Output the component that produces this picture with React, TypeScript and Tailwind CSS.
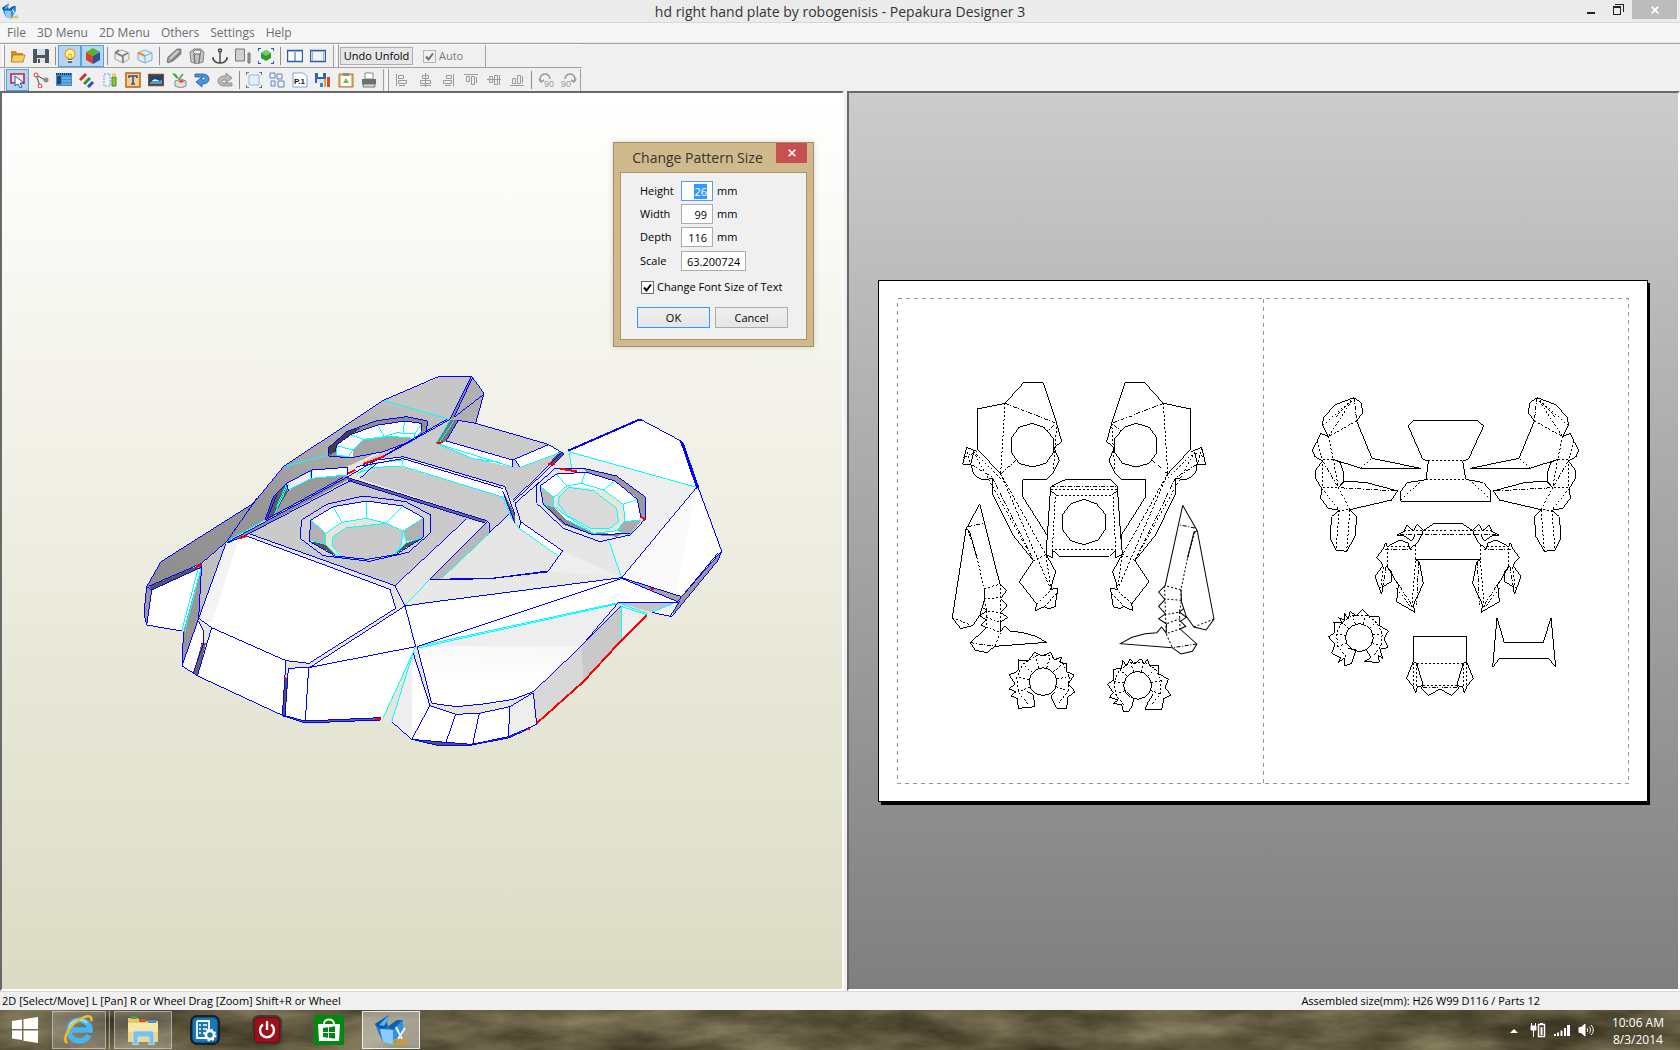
import { useEffect, useRef, type ReactNode } from "react"

const MENUS = ["File", "3D Menu", "2D Menu", "Others", "Settings", "Help"]

interface Face {
  points: string;
  fill: string;
}

interface Edge {
  d: string;
  color: string;
  width?: number;
}

// Faces of the 3D model, back to front
const FACES: Face[] = [
  { points: "50,680 93,605 370,430 460,320 760,121 935,49 1025,48 1062,100 1037,190 1255,252 1295,277 1530,180 1653,243 1775,573 1625,770 1550,765 1220,1093 1135,1130 1025,1153 948,1155 845,1138 785,1085 752,1080 526,1088 455,1065 157,918 158,813 50,795", fill: "#e6e6da" },
  { points: "50,680 93,605 370,430 460,320 760,121 960,178 640,325 545,330 470,370 430,410 405,480 290,545 215,610 60,688", fill: "url(#wing)" },
  { points: "760,121 935,49 1025,48 960,178", fill: "#c6c6c6" },
  { points: "1025,48 1062,100 1037,190 960,178", fill: "#b0b0b0" },
  { points: "1025,48 1022,70 972,172 960,178", fill: "#8a8a8a" },
  { points: "65,690 215,625 155,813 50,795", fill: "#ffffff" },
  { points: "50,680 65,690 50,795 42,760", fill: "#999999" },
  { points: "58,680 215,612 213,622 65,690", fill: "#555555" },
  { points: "215,612 206,775 157,915 160,815", fill: "#979797" },
  { points: "217,612 287,550 206,775", fill: "#c0c0c0" },
  { points: "205,785 222,815 222,845 190,940 157,915", fill: "#ffffff" },
  { points: "215,850 228,850 203,945 190,940", fill: "#666666" },
  { points: "290,550 355,530 780,688 797,745 537,910 470,902 245,803 205,775", fill: "#ffffff" },
  { points: "290,550 325,540 245,790 205,775", fill: "#f4f4f4" },
  { points: "245,803 468,902 457,1065 203,945", fill: "#ffffff" },
  { points: "475,925 536,922 526,1083 465,1070", fill: "#ffffff" },
  { points: "465,955 475,955 466,1068 457,1065", fill: "#555555" },
  { points: "540,922 855,862 758,1073 526,1083", fill: "#ffffff" },
  { points: "526,1083 752,1073 752,1080 526,1089 457,1067", fill: "#666666" },
  { points: "825,738 855,860 540,922", fill: "#ffffff" },
  { points: "290,548 650,352 665,362 355,522", fill: "#8c8c8c" },
  { points: "360,520 655,358 1070,485 795,677", fill: "#cacaca" },
  { points: "650,352 1070,482 1068,490 655,362", fill: "#6b6b6b" },
  { points: "795,677 1005,478 1070,487 900,658 825,735", fill: "#e6e6e6" },
  { points: "1070,487 1078,520 935,655 900,658", fill: "#b8b8b8" },
  { points: "700,305 960,178 1037,190 1255,253 1295,277 1145,420 1125,380 820,292", fill: "#cbcbcb" },
  { points: "690,355 740,320 815,318 1118,405 1140,462 1076,520 1070,482", fill: "#cbcbcb" },
  { points: "678,322 740,300 820,292 1125,385 1118,411 815,320 740,322 680,340", fill: "#ffffff" },
  { points: "960,180 985,180 945,245 918,250", fill: "#777777" },
  { points: "925,250 950,243 1150,298 1150,322 1035,297", fill: "#ffffff" },
  { points: "1155,298 1255,253 1293,276 1170,322", fill: "#ffffff" },
  { points: "1285,277 1303,282 1270,315 1255,313", fill: "#555555" },
  { points: "1118,392 1155,465 1157,500 1125,420", fill: "#6a6a6a" },
  { points: "1135,465 1165,500 1285,588 1255,633 1085,655 935,655 1078,520", fill: "#e5e5e5" },
  { points: "1172,485 1298,573 1286,590 1168,505", fill: "#ffffff" },
  { points: "825,735 900,658 1255,633 1475,653 900,725", fill: "#e8e8e8" },
  { points: "1315,275 1700,382 1475,653 1255,633 1298,573 1170,485 1155,430 1260,320", fill: "#eeeeee" },
  { points: "1315,275 1325,325 1440,540 1475,653 1298,573 1170,485 1155,430", fill: "#e6e6e6" },
  { points: "1315,272 1530,180 1653,243 1698,382", fill: "#ffffff" },
  { points: "1700,382 1775,573 1655,710 1475,655", fill: "#ffffff" },
  { points: "1698,390 1640,700 1475,655", fill: "#fafafa" },
  { points: "1655,710 1775,573 1765,600 1625,770 1643,725", fill: "#999999" },
  { points: "1475,655 1655,710 1643,725", fill: "#a5a5a5" },
  { points: "825,738 900,727 1475,653 1643,725 1465,728 860,860", fill: "#ffffff" },
  { points: "1465,728 1643,725 1565,757", fill: "#c5c5c5" },
  { points: "1565,757 1643,725 1625,770", fill: "#f6f6f6" },
  { points: "860,860 1465,728 1355,857 1210,995 1100,1030 980,1040 905,1030", fill: "url(#hull)" },
  { points: "860,860 1465,728 1355,857", fill: "#eeeeee" },
  { points: "1475,737 1550,765 1475,840", fill: "#eeeeee" },
  { points: "1355,857 1475,737 1475,840 1360,965", fill: "#c9c9c9" },
  { points: "1210,995 1355,857 1360,965 1220,1090", fill: "#d8d8d8" },
  { points: "900,1040 977,1063 1048,1060 1140,1040 1135,1130 1025,1153 948,1147 845,1138", fill: "#ffffff" },
  { points: "1140,1040 1210,998 1220,1093 1135,1130", fill: "#eeeeee" },
  { points: "848,885 895,1035 845,1138", fill: "#ffffff" },
  { points: "848,885 845,1138 785,1085", fill: "#eeeeee" },
  { points: "845,1138 948,1147 1025,1153 1135,1130 1200,1105 1135,1135 1025,1157 930,1158", fill: "#555555" },

  // rear ring
  { points: "597,262 650,215 740,182 830,170 892,183 890,212 845,243 760,275 660,294 597,288", fill: "#8e8e8e" },
  { points: "597,262 650,215 695,202 620,255 615,275 597,288", fill: "#404040" },
  { points: "620,255 665,222 745,195 825,183 873,190 876,210 850,240 760,275 670,292 620,288", fill: "#fafafa" },
  { points: "668,270 700,240 770,230 840,232 850,242 760,275 670,292", fill: "#a5a5a5" },

  // left half ring
  { points: "405,480 430,410 470,370 545,330 652,322 652,350 410,480", fill: "#9a9a9a" },
  { points: "405,480 430,410 470,370 475,392 430,470", fill: "#5c5c5c" },
  { points: "545,332 652,322 652,345 545,355", fill: "#ffffff" },
  { points: "470,372 540,335 545,355 475,392", fill: "#eeeeee" },

  // centre ring
  { points: "515,480 590,433 700,408 828,425 902,465 900,520 835,577 718,604 580,587 510,535", fill: "#d2d2d0" },
  { points: "543,480 610,440 710,423 818,438 880,473 880,532 800,583 710,598 615,588 537,543", fill: "#ffffff" },
  { points: "543,480 587,520 585,553 537,540", fill: "#b2b2b2" },
  { points: "537,543 585,553 620,588", fill: "#555555" },
  { points: "878,475 820,513 830,545 880,532", fill: "#b2b2b2" },
  { points: "880,532 830,548 795,583", fill: "#555555" },
  { points: "587,520 635,487 710,475 768,490 820,513 830,550 800,580 715,598 625,590 585,550", fill: "#e6e6da" },
  { points: "608,530 650,503 768,490 820,513 812,560 800,578 710,598 640,590 608,560", fill: "#c9c9c9" },

  // right ring
  { points: "1220,375 1275,325 1360,325 1460,348 1545,410 1548,475 1500,525 1410,545 1300,505 1220,430", fill: "#e4e4e0" },
  { points: "1360,325 1465,350 1547,412 1549,475 1532,470 1522,415 1455,363 1370,337", fill: "#9a9a9a" },
  { points: "1230,378 1280,342 1365,338 1455,363 1522,418 1532,470 1485,520 1390,525 1305,492 1240,435", fill: "#ffffff" },
  { points: "1230,378 1272,412 1272,440 1240,433", fill: "#bbbbbb" },
  { points: "1240,433 1272,442 1310,480 1390,518 1475,523 1460,530 1390,525 1300,495", fill: "#888888" },
  { points: "1460,512 1485,485 1535,480 1500,525", fill: "#ababab" },
  { points: "1272,412 1310,378 1420,390 1480,433 1485,482 1460,512 1390,520 1305,465 1272,440", fill: "#e6e6da" },
  { points: "1285,415 1315,382 1390,392 1460,445 1465,485 1440,505 1385,507 1310,465 1275,445", fill: "#dadada" },
]

const EDGES: Edge[] = [
  // fold lines
  { color: "#00ffff", d: "M760 121L960 178M462 320L600 283M290 545L405 480M215 610L290 545M215 618L165 813M206 620L155 813M760 1073L855 865M785 1085L852 870M825 735L900 658M935 655L1078 520" },
  { color: "#00ffff", d: "M918 250L1025 295L1078 305M925 252L1150 322M1035 297L1110 307M680 340L740 322L815 318L1118 411M690 335L740 308L815 300M815 318L822 292M960 180L918 250M972 182L930 245M950 178L840 240M1170 322L1293 277M1118 411L1145 475L1168 505L1285 588" },
  { color: "#00ffff", d: "M1315 275L1700 382M1318 280L1325 325M1436 542L1475 653M860 860L1465 728M865 864L1465 731M1475 737V840M1465 728L1555 762M1565 757L1643 725M1475 740L1550 765" },
  { color: "#00ffff", d: "M620 257L668 270L700 238L763 230L800 218L855 222L850 242M668 270L655 292M700 238L660 224M763 230L743 195M820 218L823 183M855 222L873 195M700 240L770 230L840 232M620 257V286L655 290" },
  { color: "#00ffff", d: "M545 355L650 345M470 392L545 355M430 470L475 372M540 335L545 355M440 440L470 372" },
  { color: "#00ffff", d: "M543 480L587 520L635 487L710 475L768 490L820 513L878 475M610 440L635 487M710 423V475M818 438L768 490M587 520L585 553L537 540M820 513L830 548L880 532M585 553L625 590L715 598L795 583L830 548M608 530L650 503L768 490M608 530V560L635 590M820 513L812 560L795 580" },
  { color: "#00ffff", d: "M1230 378L1272 412L1310 378L1355 370L1420 390L1480 433L1485 482L1460 512L1390 520L1305 465L1272 440V412M1280 342L1310 378M1365 338L1355 370M1455 363L1420 390M1522 418L1480 433M1532 480L1485 485M1240 433L1275 442M1285 415L1315 382L1390 392L1460 445L1465 485L1440 505L1385 507L1310 465L1285 430V415M1460 512L1500 525M1390 520L1310 480" },

  // cut lines
  { color: "#0000ff", d: "M50 680L93 605L370 430L460 320L760 121L920 52L935 49H1025L1062 100L1037 190L1255 253L1295 277L1150 420M50 680L42 760L50 795L155 813M50 680L65 690L50 795M58 678L215 610M65 690L213 622M215 612L206 775M160 815L157 918L203 948L455 1065L526 1083L752 1073M457 1067L526 1089L752 1080" },
  { color: "#0000ff", d: "M1022 52L960 178M1028 52L972 172M1060 104L972 172M960 178L760 290M950 178L650 352L290 548M665 360L355 522L290 550M380 415L290 545L215 610M370 430L300 530M405 480L640 352M287 552L206 775L245 803L468 902L537 910L797 745L780 688L355 530M360 522L795 677L825 738L540 922L475 925L465 1068M825 738L857 860L540 922M468 902L457 1065M536 922L526 1083M205 782L222 815V845L190 940M245 803L203 945M206 775L157 915" },
  { color: "#0000ff", d: "M650 352L1070 482L1078 490V518M655 362L1068 490M678 322L740 300L820 290L1125 380L1155 465M690 318L820 296L1120 386M690 355L740 310M795 677L1008 478M1070 487L900 658L1085 655L1255 633L1298 573L1172 485M900 660L940 660L1090 655L1250 636M980 180L1037 190M985 182L948 243L1148 300L1255 254M1148 300V322M1155 300L1170 322M1293 275L1303 282L1150 425M1118 392L1155 490M1168 505L1172 485L1155 430L1230 365M825 738L900 727L1475 653M860 860L1475 655M1076 520L1138 462" },
  { color: "#0000ff", width: 6, d: "M1315 272L1525 180L1535 180M1653 243L1702 385" },
  { color: "#0000ff", d: "M1535 180L1653 243L1775 573L1655 710L1475 653M1660 250L1706 382M1700 382L1475 653M1775 573L1765 600L1625 770M1655 710L1643 725L1475 655M1650 722L1620 770M1765 578L1640 728M1465 728H1643M1565 757L1625 770M1465 728L1355 857L1210 995M1475 737L1355 857M1210 995L1150 1018L1060 1032L980 1040L905 1030L862 862M850 880L900 1037L845 1138M900 1037L977 1063L1048 1060L1140 1040L1210 998L1220 1093M977 1063L948 1147M1048 1060L1028 1153M1140 1040L1135 1130M785 1085L845 1138L948 1147L1025 1153L1135 1130L1220 1093M845 1138L930 1158H1010L1135 1134L1200 1105" },
  { color: "#0000ff", d: "M597 262L650 215L740 182L830 170L892 183L890 212L845 243L760 275L660 294L597 288ZM620 255L665 222L745 195L825 183L873 190L876 212M615 275L620 255M405 480L430 410L470 370L545 330L652 322V345M545 330V355M470 372L475 392M410 480L440 405" },
  { color: "#0000ff", d: "M515 480L590 433L700 408L828 425L902 465L900 520L835 577L718 604L580 587L510 535ZM543 480L610 440L710 423L818 438L880 473L880 532L800 583L710 598L615 588L537 543Z" },
  { color: "#0000ff", d: "M1220 375L1275 325L1360 325L1460 348L1545 410L1548 475L1500 525L1410 545L1300 505L1220 430ZM1532 470L1522 418L1455 363L1370 337L1280 342L1230 378L1240 433L1305 492L1390 525L1500 520" },

  // open edges
  { color: "#ff0000", width: 6, d: "M1550 765L1475 840L1360 965L1220 1090" },
  { color: "#ff0000", width: 6, d: "M765 288L700 312M655 340L676 330M325 536L352 527M198 620L215 614M217 848V856M466 952V960M735 1076H752M920 250L940 246M1255 313L1275 312M1290 326L1340 334M1532 470L1546 480M1560 685L1572 688M1190 1108H1200" },
]

function ModelView() {
  return (
    <svg viewBox="2 93 840 896" className="block h-full w-full" role="img" aria-label="3D model" shapeRendering="crispEdges">
      <defs>
        <linearGradient id="wing" x1="1" y1="0" x2="0.2" y2="1">
          <stop offset="0" stopColor="#c6c6c6" />
          <stop offset="0.6" stopColor="#999999" />
          <stop offset="1" stopColor="#8f8f8f" />
        </linearGradient>
        <linearGradient id="hull" x1="0.5" y1="0" x2="0.4" y2="1">
          <stop offset="0.3" stopColor="#f6f6f6" />
          <stop offset="0.8" stopColor="#ffffff" />
        </linearGradient>
      </defs>
      <g transform="translate(130 360) scale(0.33333)">
        {FACES.map((face) => (
          <polygon key={face.points + face.fill} points={face.points} fill={face.fill} />
        ))}
        {EDGES.map((edge) => (
          <path key={edge.d} d={edge.d} stroke={edge.color} strokeWidth={edge.width ?? 3} fill="none" />
        ))}
      </g>
    </svg>
  )
}

interface PieceProps {
  cut: string;
  valley?: string;
  mountain?: string;
  transform?: string;
}

function Piece({ cut, valley, mountain, transform }: PieceProps) {
  return (
    <g transform={transform} stroke="#000000" strokeWidth="3" fill="none">
      <path d={cut} />
      {valley && <path d={valley} strokeDasharray="6 6" />}
      {mountain && <path d={mountain} strokeDasharray="12 5 3 5" />}
    </g>
  )
}

// Ring piece: a tabbed outline round a 12-sided hole, open at the bottom
function ringPiece(outline: string, cx: number, cy: number, inner: number, body: number) {
  const at = (r: number, deg: number) => {
    const a = (deg * Math.PI) / 180;
    return `${Math.round(cx + r * Math.cos(a))} ${Math.round(cy + r * Math.sin(a))}`;
  };
  let cut = outline;
  for (let i = 0; i <= 12; i++) {
    cut += `${i === 0 ? "M" : "L"}${at(inner, i * 30)}`;
  }
  let valley = "";
  for (let i = 0; i <= 9; i++) {
    const deg = 125 + i * 32;
    valley += `${i === 0 ? "M" : "L"}${at(body, deg)}`;
  }
  for (let i = 1; i < 9; i++) {
    const deg = 125 + i * 32;
    valley += `M${at(inner, deg)}L${at(body, deg)}`;
  }
  return { cut, valley };
}

const RING_LEFT = ringPiece("M262 965L280 975L285 1010L235 1015L232 985L212 978L228 965L207 957L225 942L208 915L230 905L237 895L235 870L265 872L283 847L305 858L332 847L343 868L365 862L360 878L380 880V905L403 915L385 942L405 965L383 982L380 1015H350L333 980L345 965", 309, 935, 42, 80)
const RING_RIGHT = ringPiece("M560 965L580 985L578 1005L565 1025H550L545 1005L520 1000L535 990L508 982L520 968L503 942L522 930L520 898L545 895L548 870L558 888L570 868L583 882L603 866L612 882L622 868L630 888L657 887V912L685 928L675 952L692 975L672 985L665 1020L615 1018L625 995L640 972", 593, 946, 42, 72)
const RING_SMALL = ringPiece("M145 790L168 795L155 835L135 843L132 820L115 832L122 818L95 805L105 778L85 755L103 745L102 712H128L115 698L135 705L133 685L145 703L150 680L168 692L188 673L205 693L238 695V722L265 738L252 762L265 787L240 793L248 820L235 812L238 832L193 830L212 818L200 795", 178, 758, 42, 70)

const WING = {
  cut: "M195 100L250 39H310L350 160L365 215L342 233L358 272L340 308L318 330H248V380L322 497M195 100L112 117V237L182 312M112 245L80 232L68 283L92 284L100 250M95 284L97 305L112 322L130 330L157 325V370L220 497L280 572L238 635L290 702L286 722L313 710L325 716L345 710L354 655L333 658L338 632L347 605L325 565L318 553L322 497M277 160L312 172L340 205V248L318 280L277 291L237 280L215 248L214 205L237 172Z",
  valley: "M195 100L182 312M350 160L340 310M100 245L182 325M182 312L318 555M182 312L333 660M100 245L280 570M280 572L318 553L333 660L290 702M313 710L350 670M80 235L92 284",
  mountain: "M195 100L350 160L322 183M182 312L232 267M95 284L157 322L280 570M70 262L112 245",
}

const LEG = {
  cut: "M119 402L78 478L37 743L62 776L98 767L120 735L133 690V655M119 402L180 643L200 662L182 685L202 705L182 728L203 742L180 758L182 785L195 767L210 784L245 787L285 798L320 817L165 829L140 848L105 840L91 818L140 773L122 765L138 750L120 738L140 722L127 712L133 690M78 478L88 482L110 560",
  valley: "M85 482L110 560L133 655L180 643M133 687L182 683M133 655V690L140 722L182 730M138 742L182 758M140 722V773L182 787L165 829M182 643V787M37 743L98 767",
  mountain: "M91 818L165 829M85 470L133 460",
}

const CENTRE_BOX = {
  cut: "M322 497L332 350L378 328H512L532 350L542 497M332 362L350 376M532 362L515 376M337 540L358 559H508L527 540M337 540V563L318 553M527 540V563L548 553M432 388L470 402L498 435V475L475 510L432 524L392 512L367 478V435L392 402Z",
  valley: "M334 360H530M350 376H515M346 380L337 540H527L519 380",
  mountain: "M334 349H532M322 497L318 553M542 497L548 553",
}

const ARM = {
  cut: "M85 155L68 122L70 97L108 58L162 38L185 55L187 85L170 108L216 220L362 250H182L100 223L120 232L130 262V290L115 308L135 288L200 293L293 318L275 345L150 374L170 395L165 455L140 499L108 495L90 460L95 395L118 376L85 370L62 340L65 310L47 280V255L68 228L45 215L37 195L52 168L62 145L85 155",
  valley: "M162 38L68 122M162 38L85 155M162 38L108 95M170 108L85 155L100 223H68M52 168L68 228V308H115M182 250L216 220M100 223L115 308L150 374L118 376L108 495M150 374L140 499M65 310L118 376",
  mountain: "M162 38L170 108M68 228L115 308L293 318",
}

const BRACKET = {
  cut: "M340 107H533L551 123L505 223L488 228L497 283L550 293L573 318V349H303V318L322 293L378 284L385 228L368 223L325 123Z",
  valley: "M385 228H488M378 283H497M303 345L360 290M573 345L515 290",
}

const ARCH = {
  cut: "M444 415H403L370 437L352 418L340 437L320 420L312 440L290 450L312 453L335 468L345 450M370 437L355 470L330 492L325 475L300 465L262 485L257 473L250 490L230 518L250 540L225 575L245 628L248 605L275 590V560L260 543L295 600L290 650L345 682L340 660L370 595L358 530L345 523H444",
  valley: "M312 437H444M260 484H330M262 490V543M250 545L242 610M290 610L335 670M347 480V523L335 665",
  mountain: "M300 448H444M255 493H335M356 530L350 660M260 543L340 668M258 545L248 605",
}

const BOX_FLAP = {
  cut: "M420 755H340V830L320 880L340 905L347 925L352 905L370 902L350 835L340 830M370 902L362 908L385 932L420 912",
  valley: "M350 835H420M370 902H420M341 835V905M350 838V905",
  mountain: "M370 909H420",
}

const H_SHAPE = {
  cut: "M591 698L578 847L597 822H748L767 847L753 698L730 773H613Z",
}

function PatternView() {
  return (
    <svg viewBox="849 93 829 896" className="block h-full w-full" role="img" aria-label="2D pattern" shapeRendering="crispEdges">
      <rect x="881" y="283" width="769" height="522" fill="#000000" />
      <rect x="878" y="280" width="770" height="522" fill="#000000" />
      <rect x="879" y="281" width="768" height="520" fill="#ffffff" />
      <path d="M897.5 298.5H1628.5V783.5H897.5ZM1263.5 298.5V783.5" fill="none" stroke="#969696" strokeDasharray="4 4" />

      <g transform="translate(940 370) scale(0.33333)">
        <Piece {...WING} />
        <Piece {...WING} transform="matrix(-1 0 0 1 865 0)" />
        <Piece {...CENTRE_BOX} />
        <Piece {...LEG} />
        <Piece {...LEG} transform="matrix(-1 0 0.035 1 833 4)" />
        <Piece {...RING_LEFT} />
        <Piece {...RING_RIGHT} />
      </g>

      <g transform="translate(1300 385) scale(0.33333)">
        <Piece {...ARM} />
        <Piece {...ARM} transform="matrix(-1 0 0 1 873 0)" />
        <Piece {...BRACKET} />
        <Piece {...ARCH} />
        <Piece {...ARCH} transform="matrix(-1 0 0 1 888 0)" />
        <Piece {...RING_SMALL} />
        <Piece {...BOX_FLAP} />
        <Piece {...BOX_FLAP} transform="matrix(-1 0 0 1 840 0)" />
        <Piece {...H_SHAPE} />
      </g>
    </svg>
  )
}

function PepakuraLogo({ className }: { className: string }) {
  return (
    <svg viewBox="0 0 32 32" className={className} aria-hidden="true">
      <path d="M0 10L14 1L12 7L14 14L18 15V31L8 28L4 20Z" fill="#1f7fd6" />
      <path d="M0 10L14 1L11 8L12 14L5 15Z" fill="#0f5aa6" />
      <path d="M4 11L14 1L12 7L9 12Z" fill="#56b4f5" />
      <path d="M5 15L18 16V31L8 28Z" fill="#8ccbfa" />
      <path d="M18 16L28 6V20L18 31Z" fill="#2f93ea" />
      <path d="M12 13L22 6L28 6L18 16Z" fill="#125fae" />
      <path d="M21 13L27 25M30 14L23 25" stroke="#f0f2f4" strokeWidth="2" fill="none" />
      <circle cx="21" cy="28" r="2.4" stroke="#d99a1c" strokeWidth="1.8" fill="none" />
      <circle cx="29" cy="28" r="2.4" stroke="#d99a1c" strokeWidth="1.8" fill="none" />
    </svg>
  )
}

const FILE_ICONS: Record<string, ReactNode> = {
  Open: <g><path d="M1 3h5l1 2h6v9H1z" fill="#c98f22" /><path d="M3 7h12l-2 7H1z" fill="#f6cf63" stroke="#a9761a" strokeWidth=".8" /></g>,
  Save: <g><path d="M0 1h15l1 1v13H0z" fill="#4d5560" /><path d="M4 1h8v6H4z" fill="#cfe0f2" /><path d="M4 10h8v5H4z" fill="#e4e6e8" /><path d="M5 11h2v4H5z" fill="#4d5560" /></g>,
}

const LIGHT_ICONS: Record<string, ReactNode> = {
  Light: <g><circle cx="8" cy="6" r="5" fill="#fff7a8" stroke="#e5a81c" strokeWidth="1.4" /><path d="M6 10l1-4h2l1 4" fill="none" stroke="#d99b18" /><path d="M6 11h4v4H6z" fill="#5f6b78" /><path d="M6 12.5h4" stroke="#ffffff" /></g>,
  Texture: <g><path d="M8 0l7 4-7 4-7-4z" fill="#54b32c" /><path d="M1 4l7 4v8l-7-4z" fill="#e2401f" /><path d="M15 4L8 8v8l7-4z" fill="#2452a8" /></g>,
}

const FOLD_ICONS: Record<string, ReactNode> = {
  Edges: <g stroke="#a3a3a3"><path d="M1 5l7-3 7 3v6l-6 4-8-4z" fill="#ededed" /><path d="M1 5l7 3v7" fill="none" stroke="#c9c9c9" /><path d="M1 5l4-3M2 5l6 3 6-3M9 8v7" fill="none" stroke="#7d7d7d" strokeWidth="1.6" /></g>,
  Faces: <g><path d="M1 5l7-3 7 3v7l-7 3-7-3z" fill="#d9edfb" stroke="#6fb0e2" /><path d="M1 5l7 3 7-3M8 8v7" fill="none" stroke="#6fb0e2" /><path d="M1 4.500l7 3.500" stroke="#f08a24" strokeWidth="2" /></g>,
}

const EDIT_ICONS: Record<string, ReactNode> = {
  Pen: <g><path d="M1 14l1-5 9-8h4v5l-8 7-5 2z" fill="#9a9a9a" stroke="#6c6c6c" strokeWidth=".8" /><path d="M4 11l8-8" stroke="#e0e0e0" strokeWidth="1.5" /><path d="M6 13l8-8" stroke="#6c6c6c" /></g>,
  Extrude: <g><path d="M1 4l4-3h7l3 3-1 10-6 2-6-2z" fill="#c6c6c6" stroke="#858585" /><path d="M4 4l2-2h5l1 2-1 2H6z" fill="#f0f0f0" stroke="#6f6f6f" /><path d="M5 6l1 9M11 6l-1 9" stroke="#7c7c7c" strokeWidth="1.5" /></g>,
  Anchor: <g fill="none" stroke="#4c4c4c" strokeWidth="1.5"><circle cx="8" cy="2.500" r="1.500" /><path d="M8 4v11M1 10c1 4 4 5 7 5s6-1 7-5M1 9v3M15 9v3" /></g>,
  Measure: <g stroke="#777777"><path d="M.5 1h9v12h-9z" fill="#d0d0d0" /><path d="M13 5h2v10h-2z" fill="#9d9d9d" /></g>,
  Fit: <g><path d="M8 2l5 3v5l-5 3-5-3V5z" fill="#2f9a32" /><path d="M8 2l5 3-5 3-5-3z" fill="#74cf5a" /><path d="M0 3V0h3M13 0h3v3M16 13v3h-3M3 16H0v-3" fill="none" stroke="#1653c4" strokeWidth="1.8" /></g>,
}

const WINDOW_ICONS: Record<string, ReactNode> = {
  "Two Panes": <g><path d="M.5 2.500h15v11H.5z" fill="#ffffff" stroke="#2c5f9e" strokeWidth="1.4" /><path d="M8 3v10" stroke="#2c5f9e" /><path d="M1 3.500h14" stroke="#8db8e6" /></g>,
  "One Pane": <g><path d="M.5 2.500h15v11H.5z" fill="#f2f2f2" stroke="#2c5f9e" strokeWidth="1.4" /><path d="M2.500 3v10M13.500 3v10M1 3.500h14" stroke="#8db8e6" /></g>,
}

const MODE_ICONS: Record<string, ReactNode> = {
  Select: <g><path d="M1 2h13v9H1z" fill="#e5eaf5" stroke="#c22733" strokeWidth="1.6" /><path d="M5 4v10l3-2 2 4 2-1-2-4h4z" fill="#ffffff" stroke="#2f55a3" /></g>,
  Join: <g fill="none"><path d="M3 3l9 5M3 3l4 11" stroke="#444444" /><circle cx="3" cy="3" r="2" stroke="#dd3333" fill="#ffffff" /><circle cx="7" cy="14" r="2" stroke="#dd3333" fill="#ffffff" /><circle cx="13" cy="8" r="2.500" fill="#8a8a8a" /></g>,
  Flaps: <g><path d="M0 1h16v13H0z" fill="#3f8fd6" /><path d="M0 2h16" stroke="#12355c" strokeDasharray="1 1" strokeWidth="2" /><path d="M1 4h4v8H1z" fill="#23466e" /><path d="M6 6h9M6 9h9M6 12h9" stroke="#8cc6f2" /></g>,
  Colors: <g strokeWidth="3"><path d="M1 8l6-6" stroke="#c8352b" /><path d="M5 12l6-6" stroke="#2f9440" /><path d="M9 15l5-5" stroke="#2a55b8" /></g>,
  "Flap Numbers": <g><path d="M2 2h6v12H2z" fill="#eef3fb" stroke="#6fa0d8" strokeDasharray="2 1" /><path d="M10 5h4v9h-4z" fill="#8cc63a" stroke="#4c8a1d" /><circle cx="12" cy="3" r="2" fill="#f0c95a" /></g>,
  Text: <g><path d="M1 1h14v14H1z" fill="#f8cf9a" stroke="#b8621b" strokeWidth="1.5" /><path d="M4 6V4h8v2M8 4v8M6 12h4" stroke="#33527d" strokeWidth="1.6" fill="none" /></g>,
  Image: <g><path d="M.5 2.500h15v11H.5z" fill="#1d4673" stroke="#8c4b1c" strokeWidth="1.4" /><path d="M2 11l4-4 4 2 4-1v4H2z" fill="#4a9ae0" /><path d="M4 9c2-2 5-2 7 0z" fill="#ffffff" /></g>,
  Material: <g><path d="M4 9l6-2 5 2v5l-5 2-6-2z" fill="#dedede" stroke="#888888" /><path d="M7 9l3-1 4 1-4 2z" fill="#e0492b" /><path d="M1 1l4 1 3 5-3-1z" fill="#3da63a" /><path d="M8 7l4-5" stroke="#3da63a" strokeWidth="1.5" /></g>,
  Undo: <path d="M1 2h8c8 0 8 10 0 10H8v3l-6-5 6-5v3h1c3 0 3-3 0-3H1z" fill="#4a93e0" stroke="#1d56a3" strokeWidth=".8" />,
  Redo: <path d="M15 14H7c-8 0-8-10 0-10h2V1l6 5-6 5V8H7c-3 0-3 3 0 3h8z" fill="#b9b9b9" stroke="#808080" strokeWidth=".8" />,
}

const PAGE_ICONS: Record<string, ReactNode> = {
  Zoom: <g><path d="M3 3h10v10H3z" fill="#e4eefa" stroke="#9db8d8" /><path d="M0 3V0h3M13 0h3v3M16 13v3h-3M3 16H0v-3" fill="none" stroke="#1f5fc4" strokeWidth="1.6" /></g>,
  Arrange: <g fill="#e8f0fb" stroke="#6384b4"><path d="M1 1h5v5H1zM8 2h5v5H8zM2 9h4v5H2zM9 9h6v6H9z" /></g>,
  "Page Number": <g><path d="M1 1h10l4 3v11H1z" fill="#ffffff" stroke="#7ba7d9" /><text x="2" y="12" fontSize="8" fontWeight="700" fontFamily="Liberation Sans, sans-serif" fill="#111111">P.1</text></g>,
  Export: <g><path d="M0 1h11v10H0z" fill="#2f62bf" /><path d="M3 1h5v4H3z" fill="#ffffff" /><path d="M2 7h7v4H2z" fill="#dbe7f7" /><path d="M9 15V7h2v8z" fill="#e2a12b" /><path d="M12 15V5h3v10z" fill="#e0442b" /><path d="M5 15v-4h3v4z" fill="#3c79d8" /></g>,
  Paste: <g><path d="M1 2h14v13H1z" fill="#e8c583" stroke="#a8762b" /><path d="M3 4h10v10H3z" fill="#ffffff" /><path d="M5 1h6v3H5z" fill="#8c8c8c" /><path d="M5 11l3-5 3 5z" fill="#74b94c" /></g>,
  Print: <g><path d="M4 1h8v6H4z" fill="#ffffff" stroke="#888888" /><path d="M1 7h14v5H1z" fill="#6b7077" /><path d="M2 12h12v3H2z" fill="#d7d9dc" stroke="#777777" /></g>,
}

const ALIGN_ICONS: Record<string, ReactNode> = {
  "Align Left": <path d="M2.500 2v12M4.500 3.500h5v3h-5zM4.500 8.500h8v3h-8zM5 13.500h6" />,
  "Align Center": <path d="M8.500 1v14M5.500 3.500h6v3h-6zM3.500 8.500h10v3h-10zM3 13.500h11" />,
  "Align Right": <path d="M13.500 2v12M6.500 3.500h5v3h-5zM3.500 8.500h8v3h-8zM5 13.500h6" />,
  "Align Top": <path d="M1 2.500h14M3.500 4.500h3v5h-3zM8.500 4.500h3v8h-3zM13.500 5v6" />,
  "Align Middle": <path d="M1 7.500h14M3.500 4.500h3v6h-3zM8.500 3.500h3v9h-3zM13.500 3v10" />,
  "Align Bottom": <path d="M1 13.500h14M3.500 6.500h3v5h-3zM8.500 3.500h3v8h-3zM13.500 4v7" />,
}

const ROTATE_ICONS: Record<string, ReactNode> = {
  "Rotate Left": <g><path d="M3 10a5 5 0 1 1 9-3M3 10l-2-3M3 10l3-2" strokeWidth="1.6" /><text x="6" y="15" fontSize="9" fontFamily="Liberation Sans, sans-serif" fill="#9a9a9a" stroke="none">90</text></g>,
  "Rotate Right": <g><path d="M13 10a5 5 0 1 0-9-3M13 10l2-3M13 10l-3-2" strokeWidth="1.6" /><text x="0" y="15" fontSize="9" fontFamily="Liberation Sans, sans-serif" fill="#9a9a9a" stroke="none">90</text></g>,
}

interface ToolGroupProps {
  icons: Record<string, ReactNode>;
  active?: string[];
  disabled?: boolean;
}

function ToolGroup({ icons, active = [], disabled = false }: ToolGroupProps) {
  return (
    <div className="flex">
      {Object.entries(icons).map(([name, icon]) => (
        <button
          key={name}
          type="button"
          aria-label={name}
          disabled={disabled}
          className={
            active.includes(name)
              ? "flex h-[22px] w-[23px] items-center justify-center border border-[#56a0e4] bg-[#b4d5f3]"
              : "flex h-[22px] w-[23px] items-center justify-center"
          }
        >
          <svg viewBox="0 0 16 16" className="h-4 w-4 shrink-0" fill="none" stroke={disabled ? "#9a9a9a" : undefined}>
            {icon}
          </svg>
        </button>
      ))}
    </div>
  )
}

function Separator() {
  return (
    <div className="flex w-[6px] justify-center">
      <div className="my-[2px] w-px bg-[#8c8c8c]" />
    </div>
  )
}

function Grip() {
  return <div className="mr-px ml-[2px] w-[3px] border-r border-l border-r-[#a0a0a0] border-l-white" />
}

function Toolbars() {
  return (
    <div className="border-t border-[#a0a0a0] bg-[#f0f0f0]">
      <div className="flex h-6 w-[582px] items-stretch border-t border-b border-t-white border-b-[#a0a0a0]">
        <Grip />
        <ToolGroup icons={FILE_ICONS} />
        <Separator />
        <ToolGroup icons={LIGHT_ICONS} active={["Light", "Texture"]} />
        <Separator />
        <ToolGroup icons={FOLD_ICONS} />
        <Separator />
        <ToolGroup icons={EDIT_ICONS} />
        <Separator />
        <ToolGroup icons={WINDOW_ICONS} />
        <div className="ml-1 border-r border-[#a0a0a0]" />
        <Grip />
        <div className="flex items-center border-r border-[#a0a0a0] pr-[22px]">
          <button type="button" className="h-[18px] w-[73px] border border-[#adadad] bg-[#e6e6e6] text-center text-[11px] leading-4 whitespace-nowrap text-black">
            Undo Unfold
          </button>
          <label className="ml-[10px] flex items-center gap-[3px] text-[11px] leading-4 text-[#7a7a7a]">
            <span className="relative flex">
              <input type="checkbox" defaultChecked disabled className="h-[13px] w-[13px] appearance-none border border-[#b5b5b5] bg-[#f0f0f0]" />
              <svg viewBox="0 0 13 13" className="pointer-events-none absolute inset-0 h-[13px] w-[13px]" fill="none">
                <path d="M3 6.500l2.500 3L10 3.500" stroke="#6f6f6f" strokeWidth="2" />
              </svg>
            </span>
            Auto
          </label>
        </div>
      </div>
      <div className="flex h-[23px] items-stretch pt-px">
        <Grip />
        <ToolGroup icons={MODE_ICONS} active={["Select"]} />
        <Separator />
        <ToolGroup icons={PAGE_ICONS} />
        <div className="ml-[3px] border-r border-[#a0a0a0]" />
        <Grip />
        <ToolGroup icons={ALIGN_ICONS} disabled />
        <Separator />
        <ToolGroup icons={ROTATE_ICONS} disabled />
        <div className="border-r border-[#a0a0a0]" />
      </div>
    </div>
  )
}

function TitleBar() {
  return (
    <header className="relative flex h-[23px] items-start justify-between border-b border-[#d6d8da] bg-[#ebebeb]">
      <PepakuraLogo className="mt-[3px] ml-[2px] h-4 w-4" />
      <h1 className="pointer-events-none absolute inset-x-0 text-center text-[14px] leading-6 text-[#333333]">
        hd right hand plate by robogenisis - Pepakura Designer 3
      </h1>
      <div className="flex pr-[3px]">
        <button type="button" aria-label="Minimize" className="flex h-[19px] w-[26px] items-center justify-center">
          <svg viewBox="0 0 10 12" className="h-3 w-[10px]"><path d="M1 8h8v2H1z" fill="#222222" /></svg>
        </button>
        <button type="button" aria-label="Restore" className="flex h-[19px] w-[28px] items-center justify-center">
          <svg viewBox="0 0 11 11" className="h-[11px] w-[11px]" shapeRendering="crispEdges" fill="none" stroke="#222222">
            <path d="M2 .5h8.500V8" />
            <path d="M.5 3v7.500h7V3" />
            <path d="M0 3h8" strokeWidth="2" />
          </svg>
        </button>
        <button type="button" aria-label="Close" className="flex h-[19px] w-[45px] items-center justify-center bg-[#bcbcbc]">
          <svg viewBox="0 0 8 8" className="h-2 w-2"><path d="M.7.7l6.600 6.600M7.300.7L.7 7.300" stroke="#ffffff" strokeWidth="1.8" /></svg>
        </button>
      </div>
    </header>
  )
}

const FIELD = "h-5 border border-[#abadb3] bg-white px-[5px] text-right text-[11px] leading-4 text-black outline-none selection:bg-[#3399ff] selection:text-white focus:border-[#569de5]"

function SizeDialog() {
  const heightRef = useRef<HTMLInputElement>(null);

  useEffect(() => {
    heightRef.current?.focus();
    heightRef.current?.select();
  }, []);

  return (
    <form
      role="dialog"
      aria-label="Change Pattern Size"
      onSubmit={(e) => e.preventDefault()}
      className="absolute top-[49px] right-[28px] w-[201px] border border-[#a08f68] bg-[#d0ba8c] px-[6px] pb-[6px] text-[11px] leading-4 text-black shadow-[0_0_6px_rgba(0,0,0,0.15)]"
    >
      <div className="relative flex h-[29px] justify-end">
        <h2 className="pointer-events-none absolute inset-x-0 pr-8 text-center text-[14px] leading-[29px] text-[#333333]">Change Pattern Size</h2>
        <button type="button" aria-label="Close dialog" className="flex h-5 w-[31px] items-center justify-center bg-[#c75050]">
          <svg viewBox="0 0 8 8" className="h-2 w-2"><path d="M.7.7l6.600 6.600M7.300.7L.7 7.300" stroke="#ffffff" strokeWidth="1.6" /></svg>
        </button>
      </div>
      <div className="border border-[#a9966b] bg-[#f0f0f0] px-4 pt-2 pb-[11px]">
        <div className="flex flex-col gap-[3px] pl-[3px]">
          <div className="flex items-center">
            <label htmlFor="height" className="w-[41px]">Height</label>
            <input id="height" ref={heightRef} defaultValue="26" className={`${FIELD} w-8`} />
            <span className="ml-1">mm</span>
          </div>
          <div className="flex items-center">
            <label htmlFor="width" className="w-[41px]">Width</label>
            <input id="width" defaultValue="99" className={`${FIELD} w-8`} />
            <span className="ml-1">mm</span>
          </div>
          <div className="flex items-center">
            <label htmlFor="depth" className="w-[41px]">Depth</label>
            <input id="depth" defaultValue="116" className={`${FIELD} w-8`} />
            <span className="ml-1">mm</span>
          </div>
          <div className="flex items-center pt-px">
            <label htmlFor="scale" className="w-[41px]">Scale</label>
            <input id="scale" defaultValue="63.200724" className={`${FIELD} w-[65px]`} />
          </div>
        </div>
        <label className="mt-2 flex items-center gap-[3px] pl-1 whitespace-nowrap">
          <span className="relative flex">
            <input type="checkbox" defaultChecked className="h-[13px] w-[13px] appearance-none border border-[#6b6b6b] bg-white" />
            <svg viewBox="0 0 13 13" className="pointer-events-none absolute inset-0 h-[13px] w-[13px]" fill="none">
              <path d="M3 6.500l2.500 3L10 3.500" stroke="#000000" strokeWidth="2" />
            </svg>
          </span>
          Change Font Size of Text
        </label>
        <div className="mt-3 flex gap-[5px]">
          <button type="submit" className="h-[21px] w-[73px] border border-[#3399ff] bg-linear-to-b from-[#f0f0f0] to-[#e5e5e5]">OK</button>
          <button type="button" className="h-[21px] w-[73px] border border-[#acacac] bg-linear-to-b from-[#f0f0f0] to-[#e5e5e5]">Cancel</button>
        </div>
      </div>
    </form>
  )
}

const TASK = "flex h-[38px] w-[58px] items-center justify-center"
const TASK_OPEN = "flex h-[38px] w-[58px] items-center justify-center border border-white/40 bg-white/20"

function Taskbar() {
  return (
    <footer className="relative flex h-10 shrink-0 items-center overflow-hidden bg-[#574f3a] text-white">
      <svg className="absolute inset-0 h-full w-full" aria-hidden="true">
        <filter id="rock" x="0" y="0" width="100%" height="100%" colorInterpolationFilters="sRGB">
          <feTurbulence type="fractalNoise" baseFrequency="0.01 0.03" numOctaves="5" seed="11" />
          <feColorMatrix values="0.5 0 0 0 0.13  0.48 0 0 0 0.11  0.4 0 0 0 0.05  0 0 0 0 1" />
        </filter>
        <rect width="100%" height="100%" filter="url(#rock)" />
      </svg>
      <div className="relative flex w-full items-center">
        <button type="button" aria-label="Start" className="flex w-[52px] items-center pl-3">
          <svg viewBox="0 0 26 26" className="h-[26px] w-[26px]" fill="#ffffff">
            <path d="M0 4l10-1.500V12H0zM11.500 2.300L26 0v12H11.500zM0 13.500h10V23L0 21.500zM11.500 13.500H26V26l-14.500-2.300z" />
          </svg>
        </button>
        <div className="flex gap-1">
          <div className="flex gap-[2px]">
            <button type="button" aria-label="Internet Explorer" className="flex h-[38px] w-[54px] items-center justify-center border border-white/40 bg-white/20">
              <svg viewBox="0 0 32 32" className="h-8 w-8" fill="none">
                <path d="M26 21A10.500 10.500 0 1 1 27 16H9" stroke="#49b4ee" strokeWidth="5.500" />
                <path d="M24 9A10.500 10.500 0 0 0 6 15" stroke="#a5e0fb" strokeWidth="2" />
                <path d="M4 29C-1 25 6 11 19 4c6-3 11-2 9 3" stroke="#f4bb24" strokeWidth="2.500" />
              </svg>
            </button>
            <div className="w-[2px] border-r border-white/40 bg-white/10" />
          </div>
          <button type="button" aria-label="File Explorer" className={TASK_OPEN}>
            <svg viewBox="0 0 32 30" className="h-[30px] w-8">
              <path d="M1 3h10l2 3h18v20H1z" fill="#e8c767" />
              <path d="M4 1h6v3H4z" fill="#3aa648" />
              <path d="M12 4h7v3h-7z" fill="#d8533c" />
              <path d="M21 5h8v3h-8z" fill="#4b8fd8" />
              <path d="M1 8h30v19H1z" fill="#f8e7a4" />
              <path d="M1 17h30v10H1z" fill="#f0d684" />
              <path d="M6 30V19c0-2 1-3 3-3h15c2 0 3 1 3 3v11h-5v-8H11v8z" fill="#7ebfe8" stroke="#b9e2f8" />
            </svg>
          </button>
          <button type="button" aria-label="Settings Tool" className={TASK}>
            <svg viewBox="0 0 30 30" className="h-[30px] w-[30px]">
              <rect x="1" y="1" width="28" height="28" rx="6" fill="#0d4f80" stroke="#15202b" strokeWidth="2" />
              <rect x="3" y="3" width="24" height="24" rx="4" fill="#1c76b4" />
              <path d="M7 6h12v9M7 6v17h8" fill="none" stroke="#ffffff" strokeWidth="1.8" />
              <path d="M9 10h2M13 10h4M9 14h2M13 14h4M9 18h2M13 18h2" stroke="#ffffff" strokeWidth="1.5" />
              <circle cx="20" cy="20" r="4" fill="#1c76b4" stroke="#ffffff" strokeWidth="2.5" />
              <circle cx="20" cy="20" r="5.600" fill="none" stroke="#ffffff" strokeWidth="1.6" strokeDasharray="2.200 2.200" />
            </svg>
          </button>
          <button type="button" aria-label="Power" className={TASK}>
            <svg viewBox="0 0 30 30" className="h-[30px] w-[30px]">
              <rect x="1" y="1" width="28" height="28" rx="6" fill="#6e0a10" stroke="#3f3a35" strokeWidth="2" />
              <rect x="3" y="3" width="24" height="24" rx="4" fill="#9c1019" />
              <path d="M11 9.500a7 7 0 1 0 8 0M15 6v9" fill="none" stroke="#ffffff" strokeWidth="2.400" />
            </svg>
          </button>
          <button type="button" aria-label="Store" className={TASK}>
            <svg viewBox="0 0 30 30" className="h-[30px] w-[30px]">
              <path d="M0 0h30v30H0z" fill="#00890f" />
              <path d="M4 9h22l-1 17H5z" fill="#ffffff" />
              <path d="M10 9c0-6 10-6 10 0" fill="none" stroke="#ffffff" strokeWidth="2" />
              <path d="M9 13l5-.7V17H9zM15 12.200l6-.9V17h-6zM9 18h5v4.700L9 22zM15 18h6v5.700l-6-.9z" fill="#00890f" />
            </svg>
          </button>
          <button type="button" aria-label="Pepakura Designer" className="flex h-[38px] w-[58px] items-center justify-center border border-white/80 bg-white/40">
            <PepakuraLogo className="h-8 w-8" />
          </button>
        </div>
        <div className="ml-auto flex items-center pr-4">
          <svg viewBox="0 0 8 5" className="mr-3 h-[5px] w-2" aria-hidden="true"><path d="M0 5l4-4 4 4z" fill="#ffffff" /></svg>
          <svg viewBox="0 0 16 16" className="mr-2 h-4 w-4" aria-hidden="true">
            <path d="M8.500 2.500h6v12h-6z" fill="none" stroke="#ffffff" strokeWidth="1.5" />
            <path d="M10 1h3v2h-3zM10.500 5h2v8h-2z" fill="#ffffff" />
            <path d="M1 4h5v4H1zM1.500 1v3M5.500 1v3M3.500 8v7" fill="#ffffff" stroke="#ffffff" />
          </svg>
          <svg viewBox="0 0 16 16" className="mr-2 h-4 w-4" fill="#ffffff" aria-hidden="true">
            <path d="M0 12h2v2H0zM3 10.500h2V14H3zM6.500 8.500h2V14h-2zM10 6h2v8h-2zM13 3h3v11h-3z" />
          </svg>
          <svg viewBox="0 0 16 16" className="mr-[18px] h-4 w-4" fill="none" stroke="#ffffff" aria-hidden="true">
            <path d="M1 5.500h2L7 2v12L3 10.500H1z" fill="#ffffff" />
            <path d="M9 6c1 1 1 3 0 4M11 4.500c2 2 2 5 0 7M13 3c3 3 3 7 0 10" />
          </svg>
          <div className="pt-px text-center text-[12px] leading-[17px] whitespace-nowrap">
            <div>10:06 AM</div>
            <div>8/3/2014</div>
          </div>
        </div>
      </div>
    </footer>
  )
}

export default function App() {
  return (
    <div className="flex h-screen flex-col overflow-hidden bg-[#f0f0f0] font-['Open_Sans',sans-serif]">
      <TitleBar />
      <nav className="flex h-5 items-center gap-[11px] border-b border-[#e8e8e8] bg-[#f5f6f7] pl-[7px] text-[12px] leading-4 text-[#6d6d6d]">
        {MENUS.map((menu) => (
          <button key={menu} type="button">{menu}</button>
        ))}
      </nav>
      <Toolbars />
      <main className="flex min-h-0 flex-1 gap-[3px]">
        <section className="relative w-[844px] shrink-0 border-2 border-t-[#696969] border-r-white border-b-white border-l-[#696969] bg-linear-to-b from-white to-[#dbdbc4]">
          <ModelView />
          <SizeDialog />
        </section>
        <section className="min-w-0 flex-1 border-2 border-t-[#696969] border-r-white border-b-white border-l-[#696969] bg-linear-to-b from-[#cccccc] to-[#7f7f7f]">
          <PatternView />
        </section>
      </main>
      <div className="flex h-[19px] shrink-0 items-center justify-between border-t border-[#d7d7d7] pr-[140px] pl-[2px] text-[11px] leading-4 text-black">
        <span>2D [Select/Move] L [Pan] R or Wheel Drag [Zoom] Shift+R or Wheel</span>
        <span>Assembled size(mm): H26 W99 D116 / Parts 12</span>
      </div>
      <Taskbar />
    </div>
  )
}
